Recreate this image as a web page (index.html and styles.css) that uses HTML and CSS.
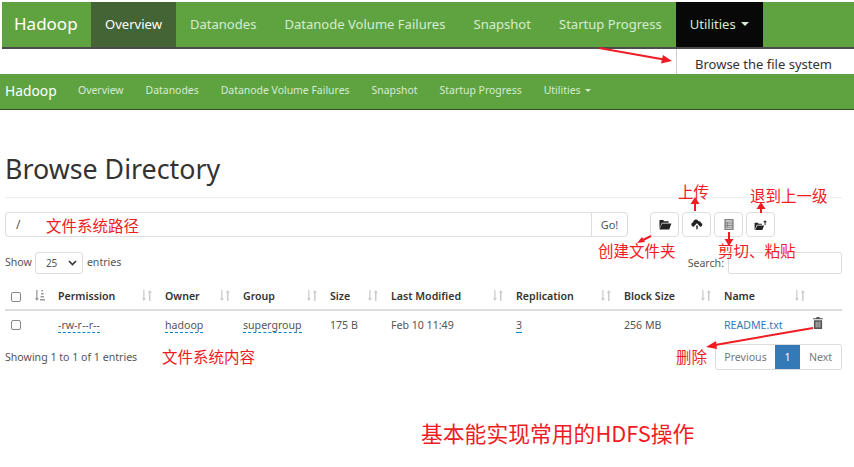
FILE: index.html
```html
<!DOCTYPE html>
<html lang="zh">
<head>
    <meta charset="UTF-8">
    <title>Browse Directory</title>
    <link rel="stylesheet" href="styles.css">
</head>
<body>
    <nav class="navbar navbar-large">
        <a class="brand">Hadoop</a>
        <a class="nav-item active">Overview</a>
        <a class="nav-item">Datanodes</a>
        <a class="nav-item">Datanode Volume Failures</a>
        <a class="nav-item">Snapshot</a>
        <a class="nav-item">Startup Progress</a>
        <a class="nav-item open">Utilities <span class="caret"></span></a>
    </nav>
    <div class="dropdown-slot">
        <div class="dropdown-menu">Browse the file system</div>
    </div>
    <nav class="navbar navbar-small">
        <a class="brand">Hadoop</a>
        <a class="nav-item">Overview</a>
        <a class="nav-item">Datanodes</a>
        <a class="nav-item">Datanode Volume Failures</a>
        <a class="nav-item">Snapshot</a>
        <a class="nav-item">Startup Progress</a>
        <a class="nav-item">Utilities <span class="caret"></span></a>
    </nav>

    <main class="content">
        <h1 class="page-title">Browse Directory</h1>

        <div class="path-row">
            <div class="path-group">
                <div class="path-input">/</div>
                <button class="btn go-btn">Go!</button>
            </div>
            <div class="tool-buttons">
                <button class="btn icon-btn">
                    <svg width="14" height="11" viewBox="0 0 14 12"><path d="M1 1h4l1 1.500h5V4H3.500L1.200 10.200H1zM3.800 5H14l-2.400 6.500H.9z" fill="#222"/></svg>
                </button>
                <button class="btn icon-btn">
                    <svg width="12" height="11" viewBox="0 0 14 12"><path d="M3 8.500H2.600A2.600 2.600 0 0 1 2.400 3.400 3.400 3.400 0 0 1 8.900 2.200 2.700 2.700 0 0 1 11.900 4.300 2.200 2.200 0 0 1 11.300 8.500H10.600L7 4.600zM5.600 8.200L7 6.700l1.400 1.500-.6.1v3.200H6.200V8.300z" fill="#222"/></svg>
                </button>
                <button class="btn icon-btn">
                    <svg width="10" height="13" viewBox="0 0 12 14"><path d="M.5.5h11v13H.5z" fill="#777"/><path d="M2 2h8v1.600H2zM2 4.600h1.400v1.200H2zM4.400 4.600H10v1.200H4.400zM2 6.800h1.400V8H2zM4.400 6.800H10V8H4.400zM2 9h1.400v1.200H2zM4.400 9H10v1.200H4.400zM2 11h8v1.200H2z" fill="#ddd"/></svg>
                </button>
                <button class="btn icon-btn">
                    <svg width="15" height="10" viewBox="0 0 14 11"><path d="M.5 3h3.500l1 1.200h3.500v1H3L.8 10.500H.5zM3.400 6H11l-2 5H1.200z" fill="#222"/><path d="M11.500 5.500V2.600H9.800L12 .4l2 2.200h-1.400v2.900z" fill="#222"/></svg>
                </button>
            </div>
        </div>

        <div class="table-controls">
            <div class="length-control">
                <span>Show</span>
                <span class="select-box">25
                    <svg width="9" height="6" viewBox="0 0 9 6"><path d="M1 1l3.500 3.500L8 1" fill="none" stroke="#333" stroke-width="1.600"/></svg>
                </span>
                <span>entries</span>
            </div>
            <div class="search-control">
                <span>Search:</span>
                <span class="search-box"></span>
            </div>
        </div>

        <table class="file-table">
            <colgroup>
                <col class="col-check"><col class="col-order"><col class="col-perm"><col class="col-owner">
                <col class="col-group"><col class="col-size"><col class="col-modified"><col class="col-repl">
                <col class="col-block"><col class="col-name"><col class="col-trash">
            </colgroup>
            <thead>
                <tr>
                    <th><span class="checkbox"></span></th>
                    <th class="sortable"><svg class="sort-icon sorted" viewBox="0 0 10 11"><use href="#sort-asc"/></svg></th>
                    <th class="sortable">Permission<svg class="sort-icon" viewBox="0 0 10 11"><use href="#sort-both"/></svg></th>
                    <th class="sortable">Owner<svg class="sort-icon" viewBox="0 0 10 11"><use href="#sort-both"/></svg></th>
                    <th class="sortable">Group<svg class="sort-icon" viewBox="0 0 10 11"><use href="#sort-both"/></svg></th>
                    <th class="sortable">Size<svg class="sort-icon" viewBox="0 0 10 11"><use href="#sort-both"/></svg></th>
                    <th class="sortable">Last Modified<svg class="sort-icon" viewBox="0 0 10 11"><use href="#sort-both"/></svg></th>
                    <th class="sortable">Replication<svg class="sort-icon" viewBox="0 0 10 11"><use href="#sort-both"/></svg></th>
                    <th class="sortable">Block Size<svg class="sort-icon" viewBox="0 0 10 11"><use href="#sort-both"/></svg></th>
                    <th class="sortable">Name<svg class="sort-icon" viewBox="0 0 10 11"><use href="#sort-both"/></svg></th>
                    <th></th>
                </tr>
            </thead>
            <tbody>
                <tr>
                    <td><span class="checkbox"></span></td>
                    <td></td>
                    <td><span class="editable">-rw-r--r--</span></td>
                    <td><span class="editable">hadoop</span></td>
                    <td><span class="editable">supergroup</span></td>
                    <td>175 B</td>
                    <td>Feb 10 11:49</td>
                    <td><span class="editable">3</span></td>
                    <td>256 MB</td>
                    <td><a class="file-link">README.txt</a></td>
                    <td class="trash-cell">
                        <svg width="10" height="12" viewBox="0 0 11 13"><path d="M4 0h3l.6 1.200H11v1.300H0V1.200h3.400zM1 3.400h9V13H1z" fill="#555"/><path d="M3 5h.9v6.400H3zM5.050 5h.9v6.400h-.9zM7.100 5h.9v6.400h-.9z" fill="#ddd"/></svg>
                    </td>
                </tr>
            </tbody>
        </table>

        <div class="table-footer">
            <span>Showing 1 to 1 of 1 entries</span>
            <div class="pagination">
                <span class="page disabled">Previous</span>
                <span class="page current">1</span>
                <span class="page disabled">Next</span>
            </div>
        </div>
    </main>

    <!-- annotations drawn on top of the screenshot -->
    <svg class="arrows" width="854" height="467" viewBox="0 0 854 467">
        <defs>
            <symbol id="sort-both" viewBox="0 0 10 11"><path d="M1.200 0h1.300v8h1.400L1.850 11 0 8h1.200zM7 3H5.800L7.800 0l2 3H8.500v8H7z" fill="#ccc"/></symbol>
            <symbol id="sort-asc" viewBox="0 0 10 11"><path d="M1.200 0h1.300v8h1.400L1.850 11 0 8h1.200zM5 9h5v1.500H5zM5.500 6H9v1.500H5.500zM6 3h2.500v1.500H6zM6.500 0H8v1.500H6.500z" fill="#999"/></symbol>
        </defs>
        <g class="arrow-line">
            <line x1="599" y1="48" x2="664" y2="59.500"/>
            <line x1="695" y1="211" x2="695" y2="203"/>
            <line x1="761" y1="213" x2="761" y2="208"/>
            <line x1="651" y1="236" x2="641" y2="241"/>
            <line x1="729" y1="232" x2="729" y2="240"/>
            <line x1="813" y1="328" x2="715" y2="345"/>
        </g>
        <g class="arrow-head">
            <polygon points="672,61 661,63.500 663,55"/>
            <polygon points="695,197 690.500,204 699.500,204"/>
            <polygon points="761,202 756.500,209 765.500,209"/>
            <polygon points="637,243 642,237 645,242"/>
            <polygon points="729,246 724.500,239 733.500,239"/>
            <polygon points="706,347 716,341 717,349"/>
        </g>
    </svg>
    <span class="note note-path">文件系统路径</span>
    <span class="note note-upload">上传</span>
    <span class="note note-up">退到上一级</span>
    <span class="note note-mkdir">创建文件夹</span>
    <span class="note note-cut">剪切、粘贴</span>
    <span class="note note-list">文件系统内容</span>
    <span class="note note-del">删除</span>
    <span class="note note-summary">基本能实现常用的HDFS操作</span>
</body>
</html>
```

FILE: styles.css
```css
* {
    box-sizing: border-box;
}
body {
    margin: 0;
    padding-top: 2px;
    width: 854px;
    height: 467px;
    overflow: hidden;
    position: relative;
    background-color: white;
    font-family: "Noto Sans", Arial, sans-serif;
    font-size: 10.600px;
    color: #555;
}
.navbar {
    display: flex;
    align-items: center;
    background-color: #5fa341;
    color: #d6ecd0;
}
.navbar .brand {
    color: white;
}
.navbar-large {
    height: 47px;
    margin-left: 2px;
    border-bottom: 2px solid #4c4c4c;
    font-size: 13.050px;
}
.navbar-large .brand {
    width: 89px;
    padding: 0 0 2px 12px;
    font-size: 17px;
}
.navbar-large .nav-item {
    display: flex;
    align-items: center;
    gap: 5px;
    height: 45px;
    padding: 0 14px 2px;
}
.navbar-large .active {
    background-color: #446435;
    color: white;
}
.navbar-large .open {
    background-color: #080808;
    color: #d6ecd0;
}
.dropdown-slot {
    height: 25px;
    display: flex;
    justify-content: flex-end;
}
.dropdown-menu {
    width: 178px;
    padding: 6px 0 0 18px;
    border-left: 1px solid #ccc;
    font-size: 13px;
    color: #333;
    overflow: hidden;
}
.navbar-small {
    height: 36px;
    padding: 0 0 3px 5px;
    border-bottom: 1px solid #2f4f22;
    font-size: 10.450px;
}
.navbar-small .brand {
    width: 62px;
    font-size: 13.800px;
}
.navbar-small .nav-item {
    display: flex;
    align-items: center;
    gap: 4px;
    padding: 0 11px;
}
.caret {
    width: 0;
    height: 0;
    border-top: 4px solid currentColor;
    border-left: 4px solid transparent;
    border-right: 4px solid transparent;
}
.navbar-small .caret {
    border-top-width: 3px;
    border-left-width: 3px;
    border-right-width: 3px;
}
.content {
    padding: 0 12px 0 5px;
}
.page-title {
    margin: 0;
    padding-top: 40px;
    height: 88px;
    border-bottom: 1px solid #eee;
    font-size: 26.800px;
    font-weight: 400;
    color: #333;
}
.path-row {
    display: flex;
    margin-top: 14px;
    gap: 22px;
}
.path-group {
    display: flex;
    width: 623px;
    height: 25px;
}
.path-input {
    flex: 1;
    padding: 3px 10px;
    border: 1px solid #ddd;
    border-right: none;
    border-radius: 4px 0 0 4px;
    font-size: 12px;
}
.btn {
    height: 25px;
    padding: 0;
    background-color: white;
    border: 1px solid #ddd;
    border-radius: 4px;
    font-family: inherit;
    color: #555;
}
.go-btn {
    width: 37px;
    border-radius: 0 4px 4px 0;
    font-size: 11px;
}
.tool-buttons {
    display: flex;
    gap: 3px;
}
.icon-btn {
    display: flex;
    align-items: center;
    justify-content: center;
    width: 29px;
}
.table-controls {
    display: flex;
    justify-content: space-between;
    align-items: center;
    margin-top: 15px;
    height: 22px;
}
.length-control {
    display: flex;
    align-items: center;
    gap: 4px;
}
.length-control span:first-child {
    margin-bottom: 2px;
    margin-right: -1px;
}
.length-control span:last-child {
    margin-bottom: 2px;
}
.select-box {
    display: flex;
    align-items: center;
    justify-content: space-between;
    width: 48px;
    height: 22px;
    padding: 0 5px 0 10px;
    border: 1px solid #ddd;
    border-radius: 3px;
    font-size: 10px;
}
.search-control {
    display: flex;
    align-items: center;
    gap: 4px;
}
.search-box {
    width: 114px;
    height: 22px;
    border: 1px solid #ddd;
    border-radius: 3px;
}
.file-table {
    table-layout: fixed;
    width: 837px;
    margin-top: 11px;
    border-collapse: collapse;
}
.col-check { width: 26px; }
.col-order { width: 19px; }
.col-perm { width: 107px; }
.col-owner { width: 78px; }
.col-group { width: 87px; }
.col-size { width: 61px; }
.col-modified { width: 125px; }
.col-repl { width: 108px; }
.col-block { width: 100px; }
.col-name { width: 94px; }
.file-table th,
.file-table td {
    padding: 0 8px;
    text-align: left;
    white-space: nowrap;
}
.file-table th {
    height: 25px;
    padding-bottom: 2px;
    border-bottom: 2px solid #ddd;
    font-weight: 600;
    color: #333;
}
.file-table td {
    height: 28px;
}
.file-table th:first-child,
.file-table td:first-child {
    padding: 0 0 0 6px;
}
.sortable {
    position: relative;
}
.sort-icon {
    position: absolute;
    right: 5px;
    top: 5px;
    width: 10px;
    height: 11px;
}
.checkbox {
    display: block;
    width: 10px;
    height: 10px;
    border: 1px solid #888;
    border-radius: 2px;
}
.editable {
    border-bottom: 1px dashed #08c;
}
.file-link {
    color: #337ab7;
}
.trash-cell {
    vertical-align: top;
}
.trash-cell svg {
    display: block;
    margin: 6px 0 0 -5px;
}
.table-footer {
    display: flex;
    justify-content: space-between;
    align-items: center;
    margin-top: 6px;
    height: 26px;
}
.pagination {
    display: flex;
    height: 26px;
    border: 1px solid #ddd;
    border-radius: 3px;
}
.page {
    display: flex;
    align-items: center;
    justify-content: center;
    color: #777;
}
.page.disabled:first-child {
    width: 59px;
}
.page.disabled:last-child {
    width: 41px;
}
.page.current {
    width: 25px;
    background-color: #337ab7;
    color: white;
}

/* annotations */
.arrows {
    position: absolute;
    left: 0;
    top: 0;
    pointer-events: none;
}
.arrow-line line {
    stroke: #f01c24;
    stroke-width: 2;
}
.arrow-head polygon {
    fill: #f01c24;
}
.note {
    position: absolute;
    font-family: "Noto Sans CJK SC", sans-serif;
    font-size: 15.500px;
    line-height: 20px;
    color: #f01c24;
    white-space: nowrap;
}
.note-path { left: 46px; top: 215px; }
.note-upload { left: 678px; top: 181px; }
.note-up { left: 750px; top: 185px; }
.note-mkdir { left: 598px; top: 240px; }
.note-cut { left: 718px; top: 240px; }
.note-list { left: 162px; top: 346px; }
.note-del { left: 676px; top: 346px; }
.note-summary { left: 421px; top: 420px; font-size: 21.800px; line-height: 26px; }
```
